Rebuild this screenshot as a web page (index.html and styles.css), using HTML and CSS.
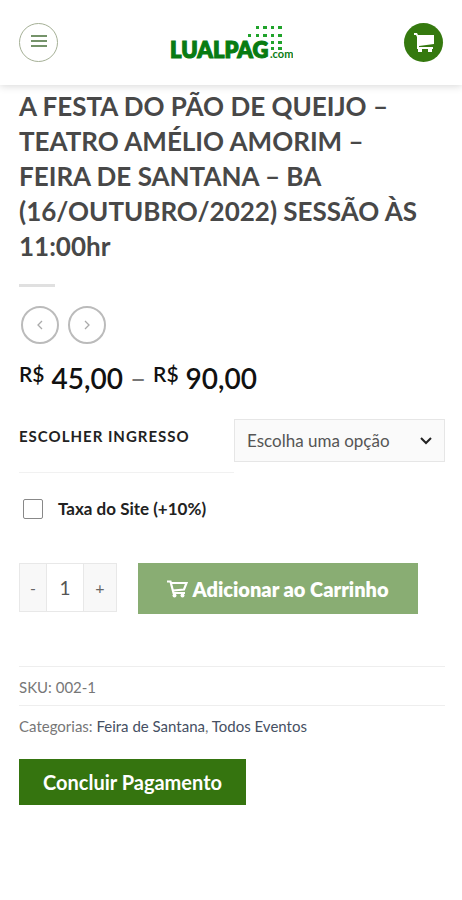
FILE: index.html
```html
<!DOCTYPE html>
<html lang="pt-BR">
<head>
<meta charset="utf-8">
<meta name="viewport" content="width=device-width, initial-scale=1">
<title>A Festa do Pão de Queijo – LUALPAG.com</title>
<link rel="stylesheet" href="styles.css">
</head>
<body>
<header class="header">
  <button class="round menu" type="button" aria-label="Menu">
    <svg width="16" height="14" viewBox="0 0 16 14"><path d="M0 2h16M0 7h16M0 12h16" stroke="currentColor" stroke-width="2"/></svg>
  </button>
  <a class="logo" href="#" aria-label="LUALPAG.com">
    <svg width="124" height="40" viewBox="0 0 124 40">
      <g class="dots">
        <path d="M87 3h3v3h-3zM94 3h4v3h-4zM102 3h3v3h-3zM109 3h4v3h-4zM79 11h3v3h-3zM87 11h3v3h-3zM94 11h4v3h-4zM102 11h3v3h-3zM109 11h4v3h-4zM102 18h3v3h-3zM109 18h4v3h-4zM102 24h3v3h-3zM109 24h4v3h-4z"/>
      </g>
      <text class="brand" x="1" y="35">LUALPAG</text>
      <text class="domain" x="101" y="35">.com</text>
    </svg>
  </a>
  <button class="round cart" type="button" aria-label="Carrinho">
    <svg width="20" height="19" viewBox="0 0 20 19"><path d="M0 0h3l1 2h16v9L5 13v1h14v2h-1v3h-4v-3H8v3H4v-3H3V4L2 2H0z" fill="currentColor"/></svg>
  </button>
</header>
<main class="product">
  <h1 class="title">A FESTA DO PÃO DE QUEIJO – TEATRO AMÉLIO AMORIM – FEIRA DE SANTANA – BA (16/OUTUBRO/2022) SESSÃO ÀS 11:00hr</h1>
  <div class="divider"></div>
  <nav class="pager" aria-label="Produtos">
    <a class="round arrow" href="#" aria-label="Anterior"><svg width="6" height="10" viewBox="0 0 6 10"><path d="M5 1L1 5l4 4" fill="none" stroke="currentColor" stroke-width="1.3"/></svg></a>
    <a class="round arrow" href="#" aria-label="Próximo"><svg width="6" height="10" viewBox="0 0 6 10"><path d="M1 1l4 4-4 4" fill="none" stroke="currentColor" stroke-width="1.3"/></svg></a>
  </nav>
  <p class="price"><span class="currency">R$</span> 45,00 <span class="dash">–</span> <span class="currency">R$</span> 90,00</p>
  <form class="form">
    <div class="variation">
      <label class="variation-label" for="ticket">ESCOLHER INGRESSO</label>
      <div class="select-wrap">
        <select class="select" id="ticket"><option>Escolha uma opção</option></select>
        <svg class="chevron" width="12" height="8" viewBox="0 0 12 8"><path d="M1 1l5 5 5-5" fill="none" stroke="currentColor" stroke-width="2"/></svg>
      </div>
    </div>
    <div class="fee">
      <input class="check" type="checkbox" id="fee">
      <label for="fee">Taxa do Site (+10%)</label>
    </div>
    <div class="buy">
      <div class="quantity">
        <button class="step" type="button" aria-label="Diminuir">-</button>
        <input class="amount" type="text" inputmode="numeric" value="1" aria-label="Quantidade">
        <button class="step" type="button" aria-label="Aumentar">+</button>
      </div>
      <button class="add" type="button">
        <svg width="21" height="18" viewBox="0 0 21 18"><path d="M0 1.500h3.500l3 11.500h11.500M4 3h15.500l-2.500 6.500-11 1" fill="none" stroke="currentColor" stroke-width="2.200"/><circle cx="7.500" cy="15.500" r="2" fill="currentColor"/><circle cx="15.500" cy="15.500" r="2" fill="currentColor"/></svg>
        <span>Adicionar ao Carrinho</span>
      </button>
    </div>
  </form>
  <div class="meta">
    <p class="meta-row">SKU: 002-1</p>
    <p class="meta-row">Categorias: <a href="#">Feira de Santana</a>, <a href="#">Todos Eventos</a></p>
  </div>
  <a class="checkout" href="#">Concluir Pagamento</a>
</main>
</body>
</html>
```
FILE: styles.css
```css
* { box-sizing: border-box; }
body {
  margin: 0;
  background: #fff;
  color: #777;
  font-family: Lato, sans-serif;
  font-size: 16px;
}
button, input, select { font: inherit; margin: 0; padding: 0; }
a { text-decoration: none; }

.header {
  display: flex;
  align-items: center;
  justify-content: space-between;
  height: 85px;
  padding: 0 19px;
  background: #fff;
  box-shadow: 0 1px 8px rgba(0, 0, 0, 0.16);
}
.round {
  display: flex;
  align-items: center;
  justify-content: center;
  width: 39px;
  height: 39px;
  border-radius: 50%;
}
.menu { border: 1px solid #a5b096; background: #fff; color: #75936a; }
.menu svg { margin-bottom: 4px; }
.cart { border: 0; background: #35790f; color: #fff; }
.logo { display: flex; color: #087c12; }
.dots { fill: #20a32b; }
.brand {
  fill: #087c12;
  stroke: #087c12;
  stroke-width: 1px;
  font-size: 22px;
  font-weight: 800;
}
.domain { fill: #087c12; font-size: 11px; font-weight: 700; }

.product { padding: 4px 17px 24px 19px; }
.title {
  margin: 0;
  padding-right: 8px;
  color: #484848;
  font-size: 26px;
  font-weight: 700;
  line-height: 35px;
}
.divider { width: 36px; height: 3px; margin-top: 20px; background: #e0e0e0; }
.pager { display: flex; gap: 9px; margin: 19px 0 0 2px; }
.arrow { width: 38px; height: 38px; border: 2px solid #bbb; color: #aaa; }
.price {
  margin: 16px 0 0;
  color: #111;
  font-size: 28px;
  font-weight: 600;
  line-height: 36px;
}
.currency { font-size: 21px; vertical-align: 7px; line-height: 21px; }
.dash { color: #777; font-weight: 400; }

.variation { display: flex; margin-top: 23px; }
.variation-label {
  flex: 1;
  height: 54px;
  padding-top: 7px;
  border-bottom: 1px solid #f1f1f1;
  color: #222;
  font-weight: 700;
  font-size: 15px;
  line-height: 20px;
  letter-spacing: 1px;
}
.select-wrap { position: relative; width: 50%; max-width: 211px; height: 43px; }
.select {
  width: 100%;
  height: 100%;
  padding: 0 12px;
  border: 1px solid #e6e6e6;
  border-radius: 0;
  background: #fafafa;
  color: #555;
  font-size: 17px;
  appearance: none;
}
.chevron { position: absolute; right: 13px; top: 18px; color: #222; pointer-events: none; }
.fee {
  display: flex;
  align-items: center;
  gap: 15px;
  margin: 24px 0 0 4px;
  color: #222;
  font-size: 17px;
  font-weight: 700;
  line-height: 24px;
}
.check {
  width: 20px;
  height: 20px;
  border: 1px solid #888;
  border-radius: 2px;
  background: #fff;
  appearance: none;
}
.check:checked { background: #35790f; }
.buy { display: flex; gap: 21px; margin-top: 42px; }
.quantity { display: flex; height: 49px; border: 1px solid #e8e8e8; }
.step { width: 26px; border: 0; background: #f8f8f8; color: #666; }
.step:last-child { width: 32px; }
.amount {
  width: 38px;
  border: solid #e8e8e8;
  border-width: 0 1px;
  border-radius: 0;
  color: #555;
  font-size: 19px;
  text-align: center;
}
.add {
  display: flex;
  align-items: center;
  justify-content: center;
  gap: 4px;
  width: 280px;
  height: 51px;
  border: 0;
  background: #89ad73;
  color: #fff;
  font-size: 20px;
  font-weight: 800;
}

.meta { margin-top: 52px; font-size: 15px; line-height: 20px; }
.meta-row { margin: 0; padding: 10px 0 8px; border-top: 1px solid #eee; }
.meta a { color: #465063; }
.checkout {
  display: inline-block;
  margin-top: 15px;
  padding: 11px 24px;
  background: #35740f;
  color: #fff;
  font-size: 20px;
  font-weight: 700;
  line-height: 24px;
}
```
